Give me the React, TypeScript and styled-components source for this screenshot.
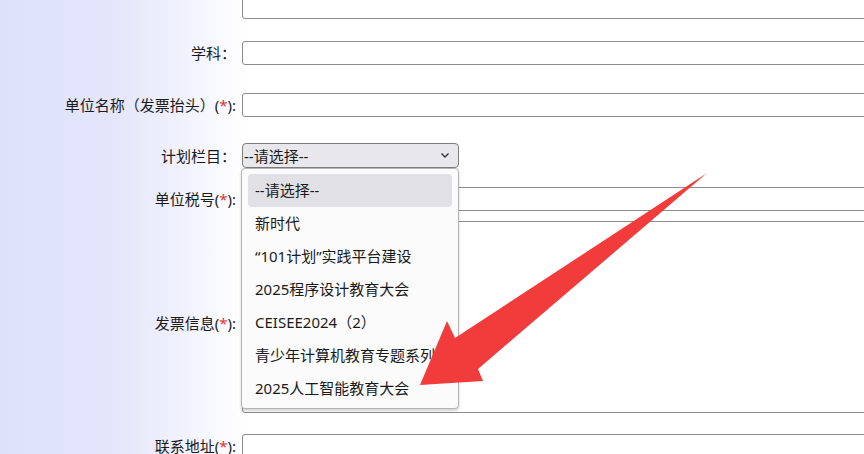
import styled, { createGlobalStyle } from "styled-components";

const GlobalStyle = createGlobalStyle`
  html, body {
    margin: 0;
    padding: 0;
    overflow: hidden;
    background: #ffffff;
  }
  body {
    font-family: "Noto Sans", "Noto Sans CJK SC", sans-serif;
  }
`;

const planOptions = [
  "--请选择--",
  "新时代",
  "“101计划”实践平台建设",
  "2025程序设计教育大会",
  "CEISEE2024（2）",
  "青少年计算机教育专题系列活动",
  "2025人工智能教育大会",
];

export default function App() {
  return (
    <Page>
      <GlobalStyle />
      <Form>
        <Row $gap={0}>
          <Label></Label>
          <TextInput />
        </Row>

        <Row $gap={22}>
          <Label>学科：</Label>
          <TextInput />
        </Row>

        <Row $gap={28}>
          <Label>
            单位名称（发票抬头）(<Star>*</Star>):
          </Label>
          <TextInput />
        </Row>

        <Row $gap={26}>
          <Label>计划栏目：</Label>
          <SelectWrap>
            <SelectBox>
              <span>--请选择--</span>
              <svg width="10" height="7" viewBox="0 0 10 7">
                <polyline
                  points="1.5,1.5 5,5 8.5,1.5"
                  fill="none"
                  stroke="#333"
                  strokeWidth="1.4"
                />
              </svg>
            </SelectBox>
            <Dropdown>
              {planOptions.map((opt, i) => (
                <Option key={opt} $active={i === 0}>
                  <OptionText>{opt}</OptionText>
                </Option>
              ))}
            </Dropdown>
          </SelectWrap>
        </Row>

        <Row $gap={19}>
          <Label>
            单位税号(<Star>*</Star>):
          </Label>
          <TextInput />
        </Row>

        <Row $gap={10}>
          <Label $offset={12}>
            发票信息(<Star>*</Star>):
          </Label>
          <TextArea />
        </Row>

        <Row $gap={21}>
          <Label>
            联系地址(<Star>*</Star>):
          </Label>
          <TextInput />
        </Row>
      </Form>

      <Arrow viewBox="0 0 864 454" width="864" height="454">
        <polygon
          points="707,173 478,369 483,381 420,385 447,321 455,338"
          fill="#f23c3c"
        />
      </Arrow>
    </Page>
  );
}

const Page = styled.div`
  position: relative;
  width: 864px;
  height: 454px;
  overflow: hidden;
  background: linear-gradient(
    90deg,
    #dde1fa 0px,
    #e3e6fb 110px,
    #f1f2fd 185px,
    #ffffff 245px
  );
`;

const Form = styled.div`
  display: flex;
  flex-direction: column;
  margin-top: -5px;
`;

const Row = styled.div<{ $gap: number }>`
  display: flex;
  align-items: center;
  gap: 6px;
  margin-top: ${(p) => p.$gap}px;
`;

const Label = styled.div<{ $offset?: number }>`
  width: 236px;
  flex-shrink: 0;
  text-align: right;
  font-size: 15px;
  line-height: 20px;
  color: #1a1a1a;
  white-space: nowrap;
  padding-top: ${(p) => (p.$offset ? p.$offset : 0)}px;
`;

const Star = styled.span`
  color: #e53030;
`;

const TextInput = styled.div`
  width: 700px;
  height: 22px;
  flex-shrink: 0;
  border: 1px solid #8c8c8c;
  border-radius: 3px;
  background: #ffffff;
`;

const TextArea = styled(TextInput)`
  height: 190px;
`;

const SelectWrap = styled.div`
  position: relative;
  z-index: 2;
`;

const SelectBox = styled.div`
  height: 23px;
  width: 206px;
  box-sizing: content-box;
  border: 1px solid #7d7d7d;
  border-radius: 4px;
  background: #e8e8ec;
  display: flex;
  align-items: center;
  justify-content: space-between;
  padding: 0 8px 0 1px;
  font-size: 15px;
  color: #1a1a1a;

  & > svg {
    flex-shrink: 0;
  }
`;

const Dropdown = styled.div`
  position: absolute;
  top: 100%;
  left: -1px;
  width: 204px;
  padding: 5px 6px 3px 6px;
  background: #fbfbfb;
  border: 1px solid #b4b4b4;
  border-radius: 4px;
  box-shadow: 0 2px 3px rgba(0, 0, 0, 0.18);
`;

const Option = styled.div<{ $active?: boolean }>`
  height: 33px;
  box-sizing: border-box;
  display: flex;
  align-items: center;
  padding: 0 16px 3px 7px;
  border-radius: 4px;
  background: ${(p) => (p.$active ? "#e0e0e5" : "transparent")};
  font-size: 15px;
  color: #1a1a1a;
`;

const OptionText = styled.span`
  display: block;
  white-space: nowrap;
  overflow: hidden;
`;

const Arrow = styled.svg`
  position: absolute;
  top: 0;
  left: 0;
  z-index: 3;
  pointer-events: none;
`;
